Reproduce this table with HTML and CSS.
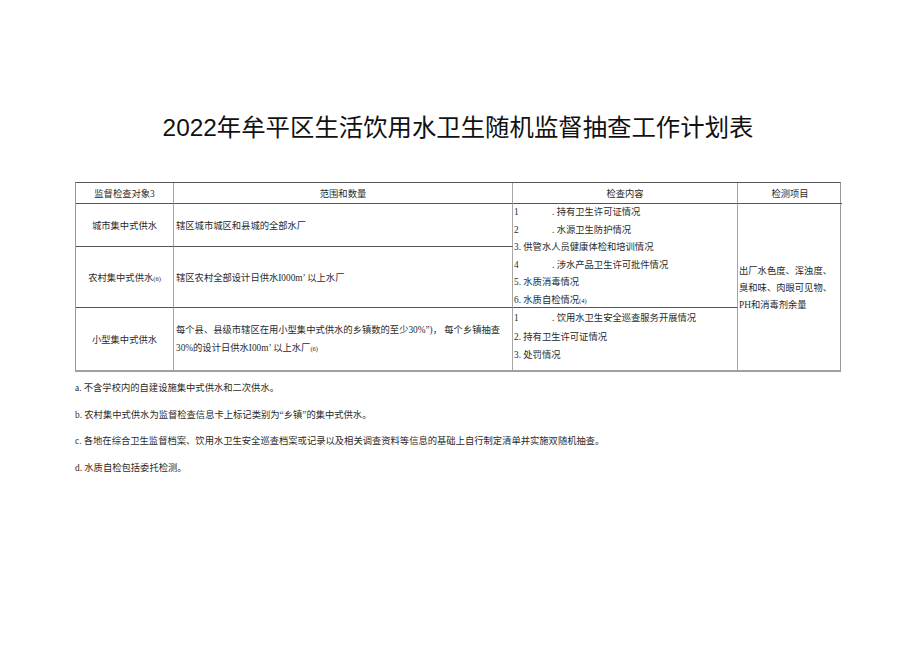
FILE: index.html
```html
<!DOCTYPE html>
<html lang="zh-CN">
<head>
<meta charset="utf-8">
<link rel="stylesheet" href="styles.css">
</head>
<body>
<div class="page">
  <h1 class="title">2022年牟平区生活饮用水卫生随机监督抽查工作计划表</h1>
  <div class="grid">
    <div class="c h c1">监督检查对象3</div>
    <div class="c h c2">范围和数量</div>
    <div class="c h c3">检查内容</div>
    <div class="c h c4">检测项目</div>

    <div class="c name r1"><div>城市集中式供水</div></div>
    <div class="c scope r1"><div>辖区城市城区和县城的全部水厂</div></div>
    <div class="c items ia">
      <div><span class="n">1</span>. 持有卫生许可证情况</div>
      <div><span class="n">2</span>. 水源卫生防护情况</div>
      <div>3. 供管水人员健康体检和培训情况</div>
      <div><span class="n">4</span>. 涉水产品卫生许可批件情况</div>
      <div>5. 水质消毒情况</div>
      <div>6. 水质自检情况<span class="sm">(4)</span></div>
    </div>
    <div class="c test"><div>出厂水色度、浑浊度、<br>臭和味、肉眼可见物、<br>PH和消毒剂余量</div></div>

    <div class="c name r2"><div>农村集中式供水<span class="sm">(6)</span></div></div>
    <div class="c scope r2"><div>辖区农村全部设计日供水I000m’ 以上水厂</div></div>

    <div class="c name r3"><div>小型集中式供水</div></div>
    <div class="c scope r3 two"><div>每个县、县级市辖区在用小型集中式供水的乡镇数的至少30%”)， 每个乡镇抽查<br>30%的设计日供水I00m’ 以上水厂<span class="sm">(6)</span></div></div>
    <div class="c items ib">
      <div><span class="n">1</span>. 饮用水卫生安全巡查服务开展情况</div>
      <div>2. 持有卫生许可证情况</div>
      <div>3. 处罚情况</div>
    </div>
  </div>
  <div class="notes">
    <p>a. 不含学校内的自建设施集中式供水和二次供水。</p>
    <p>b. 农村集中式供水为监督检查信息卡上标记类别为“乡镇”的集中式供水。</p>
    <p>c. 各地在综合卫生监督档案、饮用水卫生安全巡查档案或记录以及相关调查资料等信息的基础上自行制定清单并实施双随机抽查。</p>
    <p>d. 水质自检包括委托检测。</p>
  </div>
</div>
</body>
</html>
```

FILE: styles.css
```css
html, body {
  margin: 0;
  padding: 0;
  background: #ffffff;
}
.page {
  width: 766px;
  margin-left: 75px;
  padding-top: 112px;
  font-family: "Liberation Serif", "Noto Sans CJK SC", serif;
  color: #2a2a2a;
}
.title {
  margin: 0 0 0 -12px;
  width: 790px;
  text-align: center;
  font-family: "Liberation Sans", "Noto Sans CJK SC", sans-serif;
  font-weight: normal;
  font-size: 24.4px;
  line-height: 32px;
  color: #111;
  height: 32px;
}
.grid {
  margin-top: 38px;
  display: grid;
  grid-template-columns: 98px 339px 225px 104px;
  grid-template-rows: 21px 43px 61px 62px;
  border-top: 1px solid #555;
  border-left: 1px solid #999;
  border-bottom: 2px solid #a0a0a0;
  border-right: 1px solid #999;
  font-size: 9.3px;
  box-sizing: border-box;
  width: 766px;
}
.c {
  box-sizing: border-box;
  border-right: 1.5px solid #a6a6a6;
  border-bottom: 1px solid #555;
  overflow: visible;
  white-space: nowrap;
}
.c4, .test { border-right: none; }
.h {
  display: flex;
  align-items: center;
  justify-content: center;
}
.name {
  display: flex;
  align-items: center;
  justify-content: center;
}
.scope {
  display: flex;
  align-items: center;
  padding-left: 2px;
}
.scope.two {
  line-height: 18px;
  padding-top: 1px;
}
.r1 { grid-row: 2; }
.r2 { grid-row: 3; }
.r3 { grid-row: 4; border-bottom: none; }
.name.r1, .name.r2, .name.r3 { grid-column: 1; }
.scope.r1, .scope.r2, .scope.r3 { grid-column: 2; }
.items {
  grid-column: 3;
  padding-left: 1px;
  line-height: 17.6px;
}
.ia { grid-row: 2 / span 2; padding-top: 0; }
.ib { grid-row: 4; border-bottom: none; line-height: 18.5px; padding-top: 1px; }
.n {
  display: inline-block;
  width: 38px;
}
.test {
  grid-column: 4;
  grid-row: 2 / span 3;
  border-bottom: none;
  display: flex;
  align-items: center;
  line-height: 17px;
  padding-left: 1px;
  padding-top: 2px;
}
.sm {
  font-size: 6.5px;
}
.notes {
  margin-top: 3px;
  font-size: 9.3px;
}
.notes p {
  margin: 0;
  line-height: 26.6px;
}
```
